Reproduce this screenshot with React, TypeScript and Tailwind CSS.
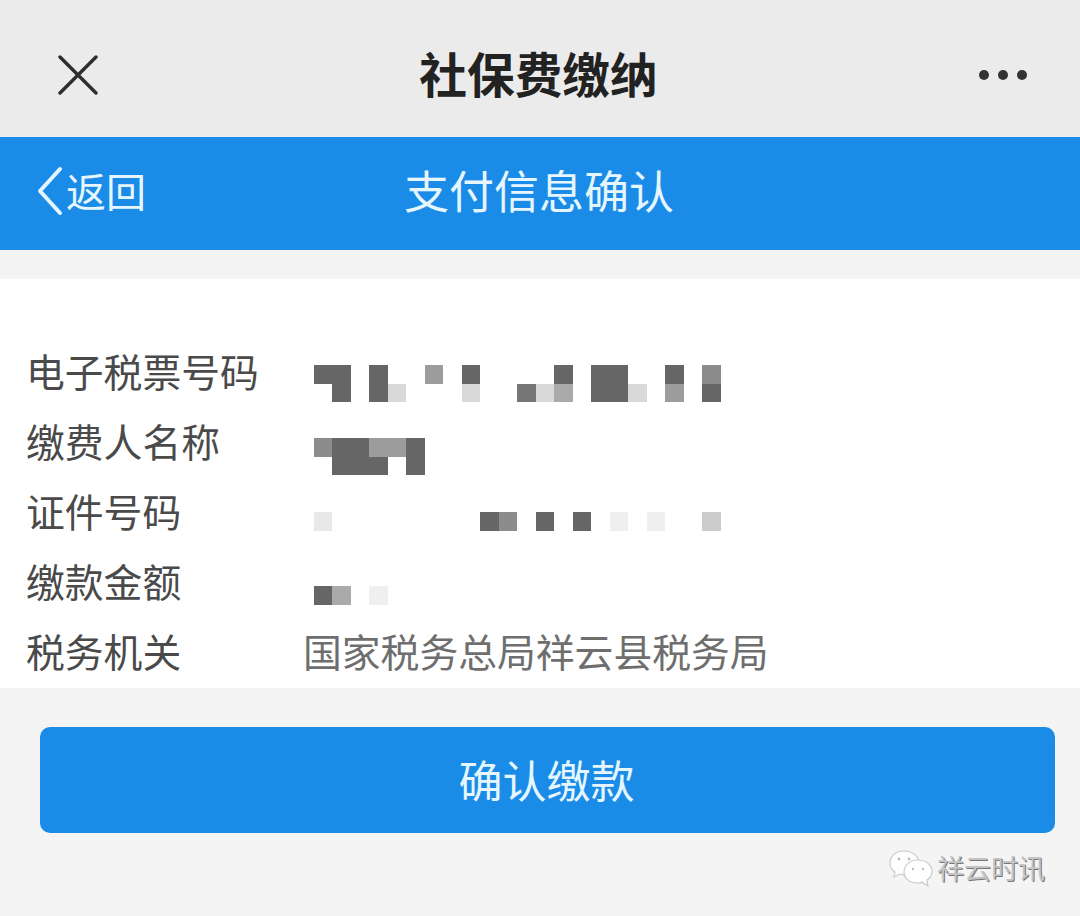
import React from "react";

const CJK = "font-['Noto_Sans_CJK_SC','Noto_Sans',sans-serif]";

const shade: Record<string, string> = {
  d: "bg-[#666666]",
  a: "bg-[#777777]",
  b: "bg-[#8c8c8c]",
  c: "bg-[#9c9c9c]",
  e: "bg-[#aaaaaa]",
  f: "bg-[#cccccc]",
  g: "bg-[#d9d9d9]",
  h: "bg-[#e8e8e8]",
  i: "bg-[#efefef]",
  ".": "",
};

function Mosaic({ rows, offset }: { rows: string[]; offset: string }) {
  return (
    <div className={`-ml-[0.4px] grid grid-cols-[repeat(22,18.5px)] auto-rows-[18.5px] ${offset}`}>
      {rows.flatMap((r, y) =>
        r.padEnd(22, ".").split("").map((c, x) => <div key={`${y}-${x}`} className={shade[c]} />)
      )}
    </div>
  );
}

function Row({ label, children }: { label: string; children: React.ReactNode }) {
  return (
    <div className="flex h-[70px]">
      <div className="w-[287px] shrink-0 -ml-[1px] mr-[1px] text-[38.8px] leading-[64px] text-[#4a4a4a]">{label}</div>
      {children}
    </div>
  );
}

function WeChatMark() {
  return (
    <svg width="46" height="38" viewBox="0 0 46 38" fill="#ffffff" stroke="#c9c9c9" strokeWidth="1.2">
      <path d="M16 2C8 2 2 7 2 14c0 4 2 7 5 9l-1 5 6-3c1 0 3 1 5 1 6 0 14-5 14-12S24 2 16 2z" />
      <path d="M30 11c-8 0-14 5-14 12s6 11 14 11c2 0 3 0 4-1l6 4-1-6c3-2 5-5 5-8 0-7-6-12-14-12z" />
      <circle cx="11" cy="10" r="1.4" fill="#bdbdbd" stroke="none" />
      <circle cx="21" cy="10" r="1.4" fill="#bdbdbd" stroke="none" />
      <circle cx="25" cy="20" r="1.2" fill="#bdbdbd" stroke="none" />
      <circle cx="35" cy="20" r="1.2" fill="#bdbdbd" stroke="none" />
    </svg>
  );
}

export default function App() {
  return (
    <div className={`w-[1080px] h-[916px] overflow-hidden bg-[#f4f4f4] ${CJK}`}>
      <header className="h-[137px] pt-[13px] bg-[#ebebeb] flex items-center justify-between pl-[58px] pr-[53px]">
        <svg width="40" height="40" viewBox="0 0 40 40" stroke="#2e2e2e" strokeWidth="3.4" strokeLinecap="round">
          <path d="M2 2l36 36M38 2L2 38" />
        </svg>
        <h1 className="-mt-[5px] text-[47.7px] font-bold leading-none text-[#222222]">社保费缴纳</h1>
        <div className="flex gap-[9px]">
          <span className="w-[10px] h-[10px] rounded-full bg-[#333333]" />
          <span className="w-[10px] h-[10px] rounded-full bg-[#333333]" />
          <span className="w-[10px] h-[10px] rounded-full bg-[#333333]" />
        </div>
      </header>

      <nav className="relative h-[113px] pb-[8px] pr-[2px] bg-[#1a8ce8] flex items-center justify-center text-[#e6f6ff]">
        <div className="absolute left-[37px] top-[29px] flex items-center">
          <svg width="26" height="50" viewBox="0 0 26 50" fill="none" stroke="#e6f6ff" strokeWidth="4" strokeLinecap="round" strokeLinejoin="round">
            <path d="M23 3L3 25l20 22" />
          </svg>
          <span className="ml-[3px] text-[40px] leading-[46px] mb-[2px]">返回</span>
        </div>
        <span className="text-[45px] leading-none">支付信息确认</span>
      </nav>

      <main className="mt-[29px] h-[409px] bg-white pt-[59px] pl-[27px]">
        <Row label="电子税票号码">
          <Mosaic offset="mt-[27px]" rows={["dd.d..c.d....d.dd..d.b", ".d.dg...g..age.ddg.c.d"]} />
        </Row>
        <Row label="缴费人名称">
          <Mosaic offset="mt-[30px]" rows={["bddccd", ".ddd.d"]} />
        </Row>
        <Row label="证件号码">
          <Mosaic offset="mt-[34px]" rows={["h........db.d.d.i.i..f"]} />
        </Row>
        <Row label="缴款金额">
          <Mosaic offset="mt-[38px]" rows={["de.i"]} />
        </Row>
        <Row label="税务机关">
          <div className="-ml-[11px] text-[38.8px] leading-[64px] text-[#6e6e6e] whitespace-nowrap">
            国家税务总局祥云县税务局
          </div>
        </Row>
      </main>

      <div className="pl-[40px] pr-[25px] pt-[39px]">
        <button className="w-full h-[106px] rounded-[10px] bg-[#1a8ce8] text-[#e6f6ff] text-[44px] leading-none pb-[2px] pr-[2px]">
          确认缴款
        </button>
      </div>

      <div className="flex justify-end items-center pr-[35px] mt-[16px] gap-[3px]">
        <WeChatMark />
        <span className="text-[27px] leading-[38px] text-[#c4c4c4] [text-shadow:1px_1px_0_#777]">祥云时讯</span>
      </div>
    </div>
  );
}
